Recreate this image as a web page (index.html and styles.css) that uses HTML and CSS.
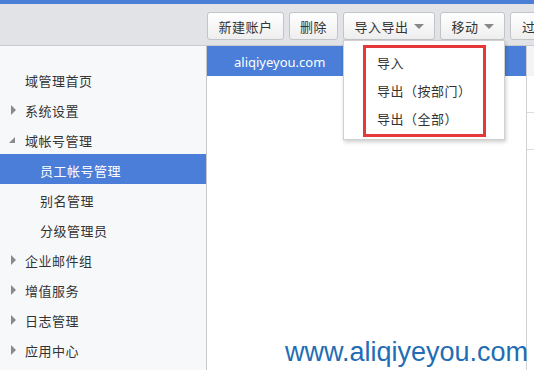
FILE: index.html
```html
<!DOCTYPE html>
<html lang="zh-CN">
<head>
    <meta charset="UTF-8">
    <title>域帐号管理</title>
    <link rel="stylesheet" href="styles.css">
</head>
<body>
    <div class="topbar"></div>
    <div class="toolbar">
        <div class="toolbar-spacer"></div>
        <button class="tool-btn btn-new">新建账户</button>
        <button class="tool-btn btn-del">删除</button>
        <div class="btn-wrap">
            <button class="tool-btn btn-io">导入导出 <span class="caret"></span></button>
            <div class="dropdown">
                <div class="dropdown-mark">
                    <div class="dropdown-item">导入</div>
                    <div class="dropdown-item">导出（按部门）</div>
                    <div class="dropdown-item">导出（全部）</div>
                </div>
            </div>
        </div>
        <button class="tool-btn btn-move">移动 <span class="caret"></span></button>
        <button class="tool-btn btn-filter">过</button>
    </div>

    <div class="layout">
        <nav class="sidebar">
            <div class="nav-item">域管理首页</div>
            <div class="nav-item"><span class="arrow-right"></span>系统设置</div>
            <div class="nav-item"><span class="arrow-open"></span>域帐号管理</div>
            <div class="nav-item sub active">员工帐号管理</div>
            <div class="nav-item sub">别名管理</div>
            <div class="nav-item sub">分级管理员</div>
            <div class="nav-item"><span class="arrow-right"></span>企业邮件组</div>
            <div class="nav-item"><span class="arrow-right"></span>增值服务</div>
            <div class="nav-item"><span class="arrow-right"></span>日志管理</div>
            <div class="nav-item"><span class="arrow-right"></span>应用中心</div>
        </nav>
        <main class="main">
            <div class="domain-col">
                <div class="domain-head">aliqiyeyou.com</div>
            </div>
            <div class="list-col">
                <div class="list-head"></div>
                <div class="list-row"></div>
                <div class="list-row"></div>
            </div>
        </main>
    </div>

    <div class="watermark">www.aliqiyeyou.com</div>
</body>
</html>
```

FILE: styles.css
```css
body {
    margin: 0;
    width: 534px;
    height: 371px;
    overflow: hidden;
    position: relative;
    font-family: "Noto Sans CJK SC", "Liberation Sans", sans-serif;
    color: #333;
    background-color: #fff;
}

.topbar {
    height: 4px;
    background-color: #4b7fd5;
}

.toolbar {
    height: 42px;
    background-color: #e2e3e7;
    border-bottom: 1px solid #c9cbd0;
    display: flex;
    align-items: flex-start;
    gap: 5px;
    padding-top: 8px;
    box-sizing: border-box;
    white-space: nowrap;
}

.toolbar-spacer {
    width: 202px;
    flex-shrink: 0;
}

.btn-wrap {
    position: relative;
}

.tool-btn {
    height: 28px;
    padding: 0;
    border: 1px solid #c3c4c7;
    border-radius: 3px;
    background: linear-gradient(#ffffff, #eeeeee);
    font-family: "Noto Sans CJK SC", sans-serif;
    font-size: 13px;
    letter-spacing: 0.5px;
    color: #333;
    flex-shrink: 0;
    display: flex;
    align-items: center;
    justify-content: center;
    box-sizing: border-box;
}

.btn-new { width: 77px; }
.btn-del { width: 49px; }
.btn-io { width: 92px; }
.btn-move { width: 65px; }
.btn-filter { width: 40px; justify-content: flex-start; padding-left: 11px; }

.caret {
    display: inline-block;
    width: 0;
    height: 0;
    margin-left: 5px;
    border-left: 5px solid transparent;
    border-right: 5px solid transparent;
    border-top: 5px solid #888;
}

.dropdown {
    position: absolute;
    top: 28px;
    left: 0;
    width: 162px;
    height: 100px;
    background-color: #fff;
    border: 1px solid #d0d0d0;
    box-shadow: 1px 2px 4px rgba(0, 0, 0, 0.2);
    box-sizing: border-box;
    padding: 4px 0 0 19px;
    z-index: 5;
}

.dropdown-mark {
    width: 123px;
    height: 92px;
    border: 3px solid #e53838;
    box-sizing: border-box;
    padding: 1px 0 0 11px;
}

.dropdown-item {
    height: 28px;
    line-height: 28px;
    font-size: 13px;
    letter-spacing: 0.5px;
    color: #333;
}

.layout {
    display: flex;
    height: 324px;
}

.sidebar {
    width: 206px;
    flex-shrink: 0;
    background-color: #f7f8fa;
    border-right: 1px solid #c6c8cc;
    padding-top: 18px;
}

.nav-item {
    height: 30px;
    line-height: 33px;
    padding-left: 25px;
    font-size: 13px;
    letter-spacing: 0.5px;
    position: relative;
}

.nav-item.sub {
    padding-left: 40px;
}

.nav-item.active {
    background-color: #4a7ed8;
    color: #fff;
}

.arrow-right {
    position: absolute;
    left: 11px;
    top: 11px;
    width: 0;
    height: 0;
    border-top: 5px solid transparent;
    border-bottom: 5px solid transparent;
    border-left: 5px solid #8a8a8a;
}

.arrow-open {
    position: absolute;
    left: 9px;
    top: 13px;
    width: 0;
    height: 0;
    border-left: 6px solid transparent;
    border-bottom: 6px solid #8a8a8a;
}

.main {
    flex: 1;
    display: flex;
}

.domain-col {
    width: 319px;
    border-right: 1px solid #cfd1d5;
}

.domain-head {
    height: 30px;
    line-height: 33px;
    background-color: #4a7ed8;
    color: #fff;
    font-family: "Noto Sans", "Liberation Sans", sans-serif;
    font-size: 13px;
    padding-left: 27px;
}

.list-col {
    flex: 1;
    background-color: #fff;
}

.list-head {
    height: 30px;
    background-color: #f3f4f6;
}

.list-row {
    height: 36px;
    border-bottom: 1px solid #dcdde0;
}

.watermark {
    position: absolute;
    left: 285px;
    top: 337px;
    font-family: "Liberation Sans", Arial, sans-serif;
    font-size: 27px;
    color: #1f6db5;
    z-index: 10;
}
```
